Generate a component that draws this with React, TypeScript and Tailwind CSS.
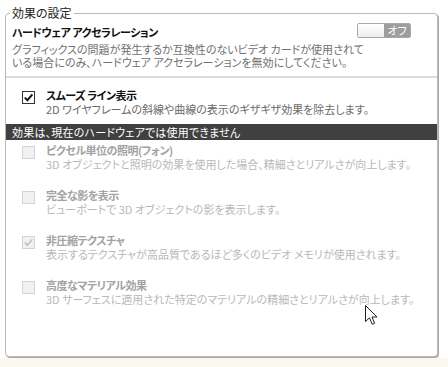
import React from "react";

const font = {
  fontFamily: '"Noto Sans CJK JP", "Noto Sans", sans-serif',
  fontFeatureSettings: '"palt"',
};

function Check({ disabled, checked }: { disabled?: boolean; checked?: boolean }) {
  return (
    <div
      className={
        "mt-[3px] ml-[10px] w-[13px] h-[13px] shrink-0 border flex items-center justify-center " +
        (disabled ? "border-[#d4d4d4] bg-[#f1f1f1]" : "border-[#333333] bg-white")
      }
    >
      {checked && (
        <svg width="11" height="11" viewBox="0 0 11 11">
          <path
            d="M1.8 5.6 L4.4 8.2 L9.4 2.4"
            fill="none"
            stroke={disabled ? "#b8b8b8" : "#111111"}
            strokeWidth={disabled ? 1.4 : 2}
          />
        </svg>
      )}
    </div>
  );
}

function Item({
  title,
  desc,
  disabled,
  checked,
}: {
  title: string;
  desc: string;
  disabled?: boolean;
  checked?: boolean;
}) {
  return (
    <div className="flex items-start">
      <Check disabled={disabled} checked={checked} />
      <div className="ml-[11px] flex flex-col">
        <div
          className={
            "h-[14px] leading-[14px] text-[11px] tracking-[-0.5px] font-bold whitespace-nowrap " +
            (disabled ? "text-[#a2a2a2]" : "text-[#111111]")
          }
        >
          {title}
        </div>
        <div
          className={
            "h-[13px] leading-[13px] text-[11px] whitespace-nowrap mt-[1px] " +
            (disabled ? "text-[#b8b8b8]" : "text-[#6a6a6a]")
          }
        >
          {desc}
        </div>
      </div>
    </div>
  );
}

export default function App() {
  return (
    <div className="w-[448px] h-[367px] bg-[#fbf9ef] relative overflow-hidden" style={font}>
      <div className="bg-white h-[358px] pt-[13px] pl-[5px] pr-[10px]">
        <div className="relative h-[344px] border border-[#b9b9b9] rounded-[4px] shadow-[1px_1px_0_#a9a9a9] bg-white">
          <span className="absolute -top-[9px] left-[4px] bg-white px-[2px] text-[12px] leading-[16px] text-[#222222]">
            効果の設定
          </span>
          <div className="pl-[6px] pt-[11px] pr-[26px]">
            <div className="flex items-start justify-between">
              <div className="h-[14px] leading-[14px] text-[11px] tracking-[-0.5px] font-bold text-[#111111] whitespace-nowrap">
                ハードウェア アクセラレーション
              </div>
              <div className="-mt-[2px] flex h-[15px] w-[54px] rounded-[2px] border border-[#a8a8a8] overflow-hidden">
                <div className="w-[26px] bg-gradient-to-b from-white to-[#ececec]" />
                <div className="flex-1 bg-[#9d9d9d] text-white text-[11px] leading-[13px] flex items-center justify-center">
                  オフ
                </div>
              </div>
            </div>
            <div className="mt-[4px] text-[11px] leading-[13px] text-[#707070] whitespace-nowrap">
              グラフィックスの問題が発生するか互換性のないビデオ カードが使用されて
              <br />
              いる場合にのみ、ハードウェア アクセラレーションを無効にしてください。
            </div>
          </div>
          <div className="mt-[7px] h-[2px] bg-[#dcdcdc]" />
          <div className="pl-[6px] mt-[10px]">
            <Item
              title="スムーズ ライン表示"
              desc="2D ワイヤフレームの斜線や曲線の表示のギザギザ効果を除去します。"
              checked
            />
          </div>
          <div className="mt-[8px] h-[16px] bg-[#404040] text-white text-[11px] tracking-[0.2px] leading-[16px] pl-[6px] whitespace-nowrap">
            効果は、現在のハードウェアでは使用できません
          </div>
          <div className="pl-[6px] mt-[3px] flex flex-col gap-[17px]">
            <Item
              title="ピクセル単位の照明(フォン)"
              desc="3D オブジェクトと照明の効果を使用した場合、精細さとリアルさが向上します。"
              disabled
            />
            <Item
              title="完全な影を表示"
              desc="ビューポートで 3D オブジェクトの影を表示します。"
              disabled
            />
            <Item
              title="非圧縮テクスチャ"
              desc="表示するテクスチャが高品質であるほど多くのビデオ メモリが使用されます。"
              disabled
              checked
            />
            <Item
              title="高度なマテリアル効果"
              desc="3D サーフェスに適用された特定のマテリアルの精細さとリアルさが向上します。"
              disabled
            />
          </div>
        </div>
      </div>
      <svg
        className="absolute left-[365px] top-[305px]"
        width="13"
        height="21"
        viewBox="0 0 13 21"
      >
        <path
          d="M0.5 0.5 L0.5 16.5 L4.5 12.8 L7.2 19.3 L9.6 18.3 L7 12 L12 12 Z"
          fill="white"
          stroke="#222222"
          strokeWidth="1"
          strokeLinejoin="round"
        />
      </svg>
    </div>
  );
}
